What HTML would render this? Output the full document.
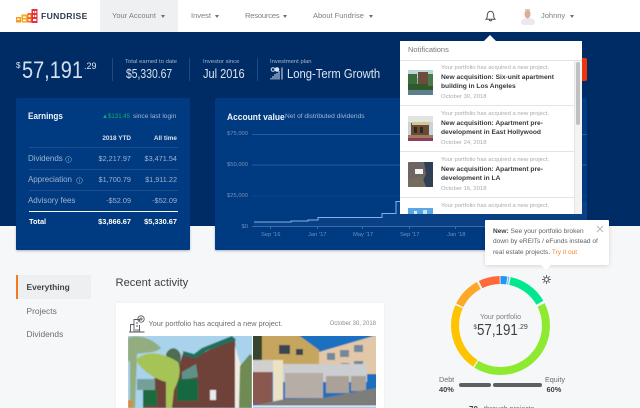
<!DOCTYPE html>
<html style="width:640px;height:408px;overflow:hidden"><head><meta charset="utf-8"><style>
html,body{margin:0;padding:0}
body{width:640px;height:408px;overflow:hidden;position:relative;background:#f6f7f9;font-family:"Liberation Sans",sans-serif}
.a{position:absolute;white-space:nowrap;line-height:12px;height:12px}
.b{position:absolute}
.r{text-align:right}
.s{transform-origin:0 50%}
.nav{font-size:7.5px;color:#7a7d82}
.car{position:absolute;width:0;height:0;border-left:2.5px solid transparent;border-right:2.5px solid transparent;border-top:3px solid #6b6e73}
.lbl{font-size:5.9px;color:#a5b6cf}
.val{font-size:12.5px;color:#dbe3ef}
.e{font-size:7.3px;color:#9fb3cf}
.el{font-size:8px;color:#9fb3cf;letter-spacing:-.05px}
.t{font-size:7.4px;color:#fff;font-weight:bold}
.ln{position:absolute;height:1px;background:#1d4e8d}
.g{font-size:5.9px;color:#a8aaae}
.h{font-size:6.65px;color:#34373c;font-weight:bold}
.ax{font-size:5.8px;color:#7290bb}
.tp{font-size:6.55px;color:#5c5f63}
</style></head><body>
<!-- header -->
<div class="b" style="left:0;top:0;width:640px;height:32px;background:#fff"></div>
<div class="b" style="left:100px;top:0;width:78px;height:32px;background:#eff0f2"></div>
<svg class="b" style="left:16px;top:9px" width="22" height="14" viewBox="0 0 22 14">
<rect x="0" y="8" width="5" height="5.5" fill="#f79a1e"/><rect x="5.5" y="5.5" width="6" height="8" fill="#f5a623"/><rect x="11.5" y="4" width="5" height="9.5" fill="#f36b21"/><rect x="15.5" y="0" width="6" height="14" fill="#e8303a"/>
<g fill="#fff"><rect x="1.2" y="9.5" width="2.5" height="1.5"/><rect x="7" y="7.5" width="3" height="1.5"/><rect x="7" y="10.5" width="3" height="1.5"/><rect x="12.5" y="6" width="2" height="2"/><rect x="12.5" y="10" width="2" height="2"/><rect x="17" y="2" width="1.3" height="2"/><rect x="19" y="2" width="1.3" height="2"/><rect x="17" y="6" width="1.3" height="2"/><rect x="19" y="6" width="1.3" height="2"/><rect x="17" y="10" width="3.3" height="2"/></g></svg>
<div class="a" style="left:41px;top:10px;font-size:8.6px;font-weight:bold;color:#2c3a4d;letter-spacing:.35px">FUNDRISE</div>
<div class="a nav" style="left:112px;top:10px">Your Account</div><div class="car" style="left:161px;top:15px"></div>
<div class="a nav" style="left:191px;top:10px">Invest</div><div class="car" style="left:215px;top:15px"></div>
<div class="a nav" style="left:245px;top:10px;letter-spacing:-.15px">Resources</div><div class="car" style="left:283px;top:15px"></div>
<div class="a nav" style="left:313px;top:10px">About Fundrise</div><div class="car" style="left:369px;top:15px"></div>
<svg class="b" style="left:485px;top:10px" width="11" height="12" viewBox="0 0 11 12" fill="none" stroke="#4a4d52" stroke-width="1"><path d="M1 9.3C2.3 8.2 2.3 7 2.3 5.2 2.3 3 3.6 1.3 5.5 1.3S8.7 3 8.7 5.2C8.7 7 8.7 8.2 10 9.3Z"/><path d="M4.3 9.6C4.3 11.3 6.7 11.3 6.7 9.6"/></svg>
<svg class="b" style="left:520px;top:8px" width="16" height="17" viewBox="0 0 16 17"><ellipse cx="8" cy="14" rx="7" ry="4" fill="#ebe8ee"/><ellipse cx="7.5" cy="6" rx="3" ry="4.5" fill="#dcae96"/><rect x="5" y="1" width="5" height="2" rx="1" fill="#d2c4b8"/></svg>
<div class="a nav" style="left:541px;top:10px">Johnny</div><div class="car" style="left:570px;top:15px"></div>
<!-- blue band -->
<div class="b" style="left:0;top:32px;width:640px;height:194px;background:#002c66"></div>
<div class="a" style="left:16px;top:60px;font-size:8px;color:#dfe6f0">$</div>
<div class="a s" style="left:21.5px;top:65px;font-size:24px;color:#d5deeb;transform:scaleX(.83)">57,191</div>
<div class="a" style="left:84px;top:60px;font-size:9px;color:#dfe6f0">.29</div>
<div class="b" style="left:112px;top:58px;width:1px;height:23px;background:#1d4a85"></div>
<div class="b" style="left:189px;top:58px;width:1px;height:23px;background:#1d4a85"></div>
<div class="b" style="left:257px;top:58px;width:1px;height:23px;background:#1d4a85"></div>
<div class="a lbl" style="left:125px;top:56px">Total earned to date</div>
<div class="a val s" style="left:125.5px;top:68px;transform:scaleX(.83)">$5,330.67</div>
<div class="a lbl" style="left:203px;top:56px">Investor since</div>
<div class="a val s" style="left:203px;top:68px;transform:scaleX(.88)">Jul 2016</div>
<div class="a lbl" style="left:270px;top:56px">Investment plan</div>
<svg class="b" style="left:270px;top:67px" width="13" height="13" viewBox="0 0 13 13" fill="none" stroke="#dbe3ee" stroke-width="1"><circle cx="3" cy="2.5" r="1.8"/><circle cx="7" cy="2.5" r="1.8" fill="#dbe3ee"/><path d="M1 12.5V11M3 12.5V9M5 12.5V7M7 12.5V6M9 12.5V4M12 .5V12.5"/></svg>
<div class="a val s" style="left:287px;top:68px;transform:scaleX(.9)">Long-Term Growth</div>
<!-- red sliver -->
<div class="b" style="left:570px;top:58px;width:17px;height:23px;background:#f0330f;border-radius:2px"></div>
<!-- earnings -->
<div class="b" style="left:16px;top:98px;width:174px;height:152px;background:#003a80;border-radius:1px;box-shadow:0 1px 2px rgba(0,30,80,.3)"></div>
<div class="a s" style="left:28px;top:111px;font-size:9.6px;color:#f2f5fa;font-weight:bold;transform:scaleX(.85)">Earnings</div>
<div class="a" style="left:102px;top:111px;font-size:6.1px;color:#10b06d">▲$131.45</div>
<div class="a" style="left:133px;top:111px;font-size:6.6px;color:#a5b6cf">since last login</div>
<div class="a t r" style="left:91px;width:40px;top:133px;font-size:6.4px;color:#d7e0ec">2018 YTD</div>
<div class="a t r" style="left:137px;width:40px;top:133px;font-size:6.4px;color:#d7e0ec">All time</div>
<div class="ln" style="left:29px;top:147px;width:149px"></div>
<div class="ln" style="left:29px;top:169px;width:149px"></div>
<div class="ln" style="left:29px;top:190px;width:149px"></div>
<div class="b" style="left:29px;top:211px;width:149px;height:1px;background:#fff"></div>
<div class="a el" style="left:28px;top:153px">Dividends</div>
<svg class="b" style="left:65px;top:156px" width="7" height="7" viewBox="0 0 7 7" fill="none" stroke="#7d96bb" stroke-width=".6"><circle cx="3.5" cy="3.5" r="2.9"/><path d="M3.5 2V5.3"/></svg>
<div class="a e r" style="left:91px;width:40px;top:153px">$2,217.97</div><div class="a e r" style="left:137px;width:40px;top:153px">$3,471.54</div>
<div class="a el" style="left:28px;top:174px">Appreciation</div>
<svg class="b" style="left:76px;top:177px" width="7" height="7" viewBox="0 0 7 7" fill="none" stroke="#7d96bb" stroke-width=".6"><circle cx="3.5" cy="3.5" r="2.9"/><path d="M3.5 2V5.3"/></svg>
<div class="a e r" style="left:91px;width:40px;top:174px">$1,700.79</div><div class="a e r" style="left:137px;width:40px;top:174px">$1,911.22</div>
<div class="a el" style="left:28px;top:195px">Advisory fees</div>
<div class="a e r" style="left:91px;width:40px;top:195px">-$52.09</div><div class="a e r" style="left:137px;width:40px;top:195px">-$52.09</div>
<div class="a t" style="left:29px;top:216px">Total</div>
<div class="a t r" style="left:91px;width:40px;top:216px">$3,866.67</div><div class="a t r" style="left:137px;width:40px;top:216px">$5,330.67</div>
<!-- account value -->
<div class="b" style="left:215px;top:98px;width:372px;height:152px;background:#003a80;border-radius:1px;box-shadow:0 1px 2px rgba(0,30,80,.3)"></div>
<div class="a s" style="left:227px;top:111px;font-size:9.4px;color:#f2f5fa;font-weight:bold;transform:scaleX(.9)">Account value</div>
<div class="a" style="left:285px;top:111px;font-size:6.6px;color:#a5b6cf">Net of distributed dividends</div>
<svg class="b" style="left:215px;top:98px" width="372" height="152" viewBox="215 98 372 152">
<path d="M252 134.5H587M252 165H587" stroke="#2a5a99" stroke-width="1"/><path d="M252 196H587" stroke="#0d4489" stroke-width="1"/>
<path d="M254 222H291V221H308V220H318V217.5H382V213.5H396V201.5H587V226.5H254Z" fill="#0a4186"/>
<path d="M252 226.5H587" stroke="#3c6ba8" stroke-width="1"/>
<path d="M270.5 226V229M317.5 226V229M362.5 226V229M409.5 226V229M455.5 226V229" stroke="#3c6ba8" stroke-width="1"/>
<path d="M254 222H291V221H308V220H318V217.5H382V213.5H396V201.5H410" fill="none" stroke="#7fb4ea" stroke-width="1"/>
</svg>
<div class="a ax r" style="left:218px;width:30px;top:128px">$75,000</div>
<div class="a ax r" style="left:218px;width:30px;top:159px">$50,000</div>
<div class="a ax r" style="left:218px;width:30px;top:190px">$25,000</div>
<div class="a ax r" style="left:218px;width:30px;top:221px">$0</div>
<div class="a ax" style="left:261px;top:229px">Sep '16</div>
<div class="a ax" style="left:308px;top:229px">Jan '17</div>
<div class="a ax" style="left:353px;top:229px">May '17</div>
<div class="a ax" style="left:400px;top:229px">Sep '17</div>
<div class="a ax" style="left:447px;top:229px">Jan '18</div>
<!-- notifications popup -->
<div class="b" style="left:484px;top:35px;width:0;height:0;border-left:6px solid transparent;border-right:6px solid transparent;border-bottom:6px solid #fff"></div>
<div class="b" style="left:400px;top:41px;width:182px;height:173px;background:#fff;overflow:hidden">
<div class="a" style="left:8px;top:3px;font-size:7.5px;color:#75787d">Notifications</div>
<div class="b" style="left:0;top:19px;width:182px;height:1px;background:#e2e3e5"></div>
<div class="b" style="left:0;top:64px;width:174px;height:1px;background:#e2e3e5"></div>
<div class="b" style="left:0;top:110px;width:174px;height:1px;background:#e2e3e5"></div>
<div class="b" style="left:0;top:156px;width:174px;height:1px;background:#e2e3e5"></div>
<div class="b" style="left:174px;top:20px;width:8px;height:153px;background:#f3f3f4;border-left:1px solid #e4e4e6;box-sizing:border-box"></div>
<div class="b" style="left:176px;top:21px;width:4px;height:63px;background:#bfc0c2;border-radius:2px"></div>
<div class="a g" style="left:41px;top:21px">Your portfolio has acquired a new project.</div>
<div class="a h" style="left:41px;top:31px">New acquisition: Six-unit apartment</div>
<div class="a h" style="left:41px;top:40px">building in Los Angeles</div>
<div class="a g" style="left:41px;top:50px">October 30, 2018</div>
<div class="a g" style="left:41px;top:67px">Your portfolio has acquired a new project.</div>
<div class="a h" style="left:41px;top:77px">New acquisition: Apartment pre-</div>
<div class="a h" style="left:41px;top:86px">development in East Hollywood</div>
<div class="a g" style="left:41px;top:96px">October 24, 2018</div>
<div class="a g" style="left:41px;top:113px">Your portfolio has acquired a new project.</div>
<div class="a h" style="left:41px;top:123px">New acquisition: Apartment pre-</div>
<div class="a h" style="left:41px;top:132px">development in LA</div>
<div class="a g" style="left:41px;top:142px">October 16, 2018</div>
<div class="a g" style="left:41px;top:159px">Your portfolio has acquired a new project.</div>
<svg class="b" style="left:8px;top:29px" width="25" height="25" viewBox="0 0 25 25"><rect width="25" height="25" rx="1" fill="#8fb3a0"/><rect y="0" width="25" height="8" fill="#b9d5d8"/><rect x="10" y="2" width="10" height="13" fill="#6d4c3f"/><rect x="0" y="4" width="9" height="14" fill="#3d6b3b"/><rect y="14" width="25" height="7" fill="#2f5a2e"/><rect y="20" width="25" height="5" fill="#5d7f8c"/><rect x="20" y="4" width="5" height="12" fill="#4a7a4a"/></svg>
<svg class="b" style="left:8px;top:75px" width="25" height="25" viewBox="0 0 25 25"><rect width="25" height="25" rx="1" fill="#c8d4dc"/><rect y="0" width="25" height="6" fill="#e2e4de"/><rect x="3" y="7" width="18" height="12" fill="#6a4a30"/><path d="M4 6H22V9H4Z" fill="#d8c49a"/><rect x="6" y="11" width="3" height="6" fill="#2d2822"/><rect x="12" y="11" width="3" height="6" fill="#2d2822"/><rect y="19" width="25" height="6" fill="#a07a60"/><rect y="22" width="25" height="3" fill="#8a3f5a"/></svg>
<svg class="b" style="left:8px;top:121px" width="25" height="25" viewBox="0 0 25 25"><rect width="25" height="25" rx="1" fill="#6e6464"/><path d="M16 0H25V25H12L18 12Z" fill="#2f4054"/><path d="M0 18L14 14 18 25H0Z" fill="#756c60"/><rect x="7" y="7" width="8" height="5" fill="#f4f4f2"/></svg>
<svg class="b" style="left:8px;top:167px" width="25" height="8" viewBox="0 0 25 8"><rect width="25" height="8" fill="#5aa7e6"/><rect x="6" y="3" width="3" height="5" fill="#dcecf7"/><rect x="15" y="2" width="4" height="6" fill="#cfe2f0"/></svg>
</div>
<!-- tooltip -->
<div class="b" style="left:485px;top:220px;width:124px;height:45px;background:#fff;border-radius:1px;box-shadow:0 1px 4px rgba(0,0,0,.14)"></div>
<div class="b" style="left:541px;top:265px;width:0;height:0;border-left:5px solid transparent;border-right:5px solid transparent;border-top:5px solid #fff"></div>
<div class="a tp" style="left:493px;top:225.5px"><b style="color:#3c3f44">New:</b> See your portfolio broken</div>
<div class="a tp" style="left:493px;top:236px">down by eREITs / eFunds instead of</div>
<div class="a tp" style="left:493px;top:247px">real estate projects. <span style="color:#f58a34">Try it out</span></div>
<svg class="b" style="left:596px;top:225px" width="8" height="8" viewBox="0 0 8 8"><path d="M1 1L7 7M7 1L1 7" stroke="#b9babd" stroke-width="1"/></svg>
<!-- gear -->
<svg class="b" style="left:542px;top:275px" width="9" height="9" viewBox="0 0 9 9" fill="none" stroke="#63666b"><circle cx="4.5" cy="4.5" r="2" stroke-width="1.1"/><path d="M4.5 0V2M4.5 7V9M0 4.5H2M7 4.5H9M1.3 1.3L2.7 2.7M6.3 6.3L7.7 7.7M1.3 7.7L2.7 6.3M6.3 2.7L7.7 1.3" stroke-width="1"/></svg>
<!-- nav side -->
<div class="b" style="left:16px;top:275px;width:75px;height:24px;background:#eeeff1"></div>
<div class="b" style="left:16px;top:275px;width:1.5px;height:24px;background:#f47a1f"></div>
<div class="a" style="left:26.5px;top:281px;font-size:8.4px;font-weight:bold;color:#3f4247">Everything</div>
<div class="a" style="left:26.5px;top:305px;font-size:8.4px;color:#6a6d72">Projects</div>
<div class="a" style="left:26.5px;top:328px;font-size:8.4px;color:#6a6d72">Dividends</div>
<div class="a" style="left:115.5px;top:277px;font-size:11.2px;color:#3c3f44">Recent activity</div>
<!-- card -->
<div class="b" style="left:116px;top:303px;width:268px;height:105px;background:#fff;box-shadow:0 0 2px rgba(0,0,0,.05)"></div>
<svg class="b" style="left:128px;top:315px" width="18" height="18" viewBox="0 0 18 18" fill="none" stroke="#55585c" stroke-width=".9"><path d="M1 17H16.5M2.5 17V9.5H6V17M6 17V4.5H11.5V6M11.5 10V17M8 8H10M8 11H10M8 14V17H10V14"/><circle cx="13" cy="4" r="3.2"/><path d="M13 2.2V5.8M11.2 4H14.8"/></svg>
<div class="a" style="left:148.5px;top:318px;font-size:7.3px;color:#6a6d72">Your portfolio has acquired a new project.</div>
<div class="a r" style="left:316px;width:60px;top:318px;font-size:6px;color:#8a8d91">October 30, 2018</div>
<svg class="b" style="left:128px;top:336px" width="124" height="72" viewBox="0 0 124 72">
<defs><filter id="bl" x="-5%" y="-5%" width="110%" height="110%"><feGaussianBlur stdDeviation=".5"/></filter></defs>
<g filter="url(#bl)">
<rect x="-2" y="-2" width="128" height="76" fill="#a9d2ec"/>
<path d="M15 72V50L30 40 50 34 55 17 68 20 107 2 109 72Z" fill="#6e4238"/>
<path d="M55 15L66 18 74 12 104 0 108 4 78 15 68 22 56 20Z" fill="#1f6f5c"/>
<path d="M107 10L116 40V72H107Z" fill="#efece4"/>
<path d="M112 30L122 18 124 20V72H111Z" fill="#6f8a52"/>
<rect x="9" y="43" width="18" height="11" fill="#75a09a"/><rect x="15" y="54" width="14" height="16" fill="#1c6b3c"/>
<path d="M54 36L68 28 70 41 54 44Z" fill="#5f9189"/><rect x="49" y="43" width="21" height="22" fill="#19683f"/>
<rect x="82" y="54" width="6" height="10" fill="#e8eaec"/>
<path d="M0 2C10 -2 24 2 33 12 26 18 16 16 9 18L7 72H2L2 26 0 24Z" fill="#93ad7e"/>
<path d="M38 18C42 10 50 10 53 20L52 30H40Z" fill="#4f6d50"/>
<path d="M8 24C18 14 34 16 50 26 54 36 50 46 46 54L44 72H38V46C30 44 14 36 8 24Z" fill="#a6c455"/>
<rect x="0" y="64" width="5" height="8" fill="#d49040"/>
</g></svg>
<svg class="b" style="left:253px;top:336px" width="123" height="72" viewBox="0 0 123 72">
<g filter="url(#bl)">
<rect x="-2" y="-2" width="127" height="76" fill="#1b6fc0"/>
<rect x="-2" y="-2" width="11" height="28" fill="#38442f"/>
<path d="M9 -2H44L66 14V28H9Z" fill="#c6a65e"/>
<rect x="26" y="9" width="11" height="9" fill="#3b4551"/><rect x="43" y="13" width="7" height="6" fill="#3b4551"/>
<path d="M66 16L124 -1V38H66Z" fill="#e2c8a8"/>
<rect x="74" y="17" width="8" height="7" fill="#73889a"/><rect x="87" y="14" width="9" height="7" fill="#73889a"/><rect x="101" y="9" width="9" height="7" fill="#73889a"/><rect x="88" y="27" width="8" height="6" fill="#73889a"/><rect x="101" y="25" width="9" height="7" fill="#73889a"/>
<path d="M30 28H114V46H30Z" fill="#cbcdd0"/>
<rect x="-2" y="24" width="22" height="12" fill="#d2d0cf"/><rect x="20" y="24" width="10" height="44" fill="#ebe2c4"/>
<rect x="-2" y="36" width="21" height="32" fill="#8a5850"/>
<rect x="32" y="37" width="38" height="25" fill="#b6ada6"/><rect x="73" y="40" width="23" height="17" fill="#aaa199"/><rect x="98" y="40" width="15" height="15" fill="#aaa199"/>
<path d="M-2 70L32 63 70 62 123 52V72H-2Z" fill="#7d7e7c"/>
</g><rect y="69.5" width="123" height="1" fill="#fff"/><rect y="70.5" width="123" height="2" fill="#a9c9e4"/></svg>
<!-- donut -->
<svg class="b" style="left:445px;top:270px" width="111" height="111" viewBox="0 0 111 111">
<g fill="none" stroke-width="8" transform="rotate(-90 55.5 55.5)">
<circle cx="55.5" cy="55.5" r="45.5" pathLength="360" stroke="#2196f3" stroke-dasharray="8 352" stroke-dashoffset="0"/>
<circle cx="55.5" cy="55.5" r="45.5" pathLength="360" stroke="#5dc5f5" stroke-dasharray="1.5 358.5" stroke-dashoffset="-9"/>
<circle cx="55.5" cy="55.5" r="45.5" pathLength="360" stroke="#00e88f" stroke-dasharray="48 312" stroke-dashoffset="-12"/>
<circle cx="55.5" cy="55.5" r="45.5" pathLength="360" stroke="#8eea30" stroke-dasharray="149 211" stroke-dashoffset="-63"/>
<circle cx="55.5" cy="55.5" r="45.5" pathLength="360" stroke="#ffc400" stroke-dasharray="81 279" stroke-dashoffset="-213.5"/>
<circle cx="55.5" cy="55.5" r="45.5" pathLength="360" stroke="#ffa726" stroke-dasharray="35 325" stroke-dashoffset="-296.5"/>
<circle cx="55.5" cy="55.5" r="45.5" pathLength="360" stroke="#ff6a3a" stroke-dasharray="25 335" stroke-dashoffset="-334"/>
</g></svg>
<div class="a" style="left:470px;width:61px;top:312px;text-align:center;font-size:7px;color:#7c7f84">Your portfolio</div>
<div class="a" style="left:473.5px;top:322px;font-size:6px;color:#3c3f44">$</div>
<div class="a s" style="left:477px;top:325px;font-size:15.5px;color:#3c3f44;transform:scaleX(.86)">57,191</div>
<div class="a" style="left:518px;top:322px;font-size:7px;color:#3c3f44">.29</div>
<div class="a" style="left:439px;top:374px;font-size:7.2px;color:#6a6d72">Debt</div>
<div class="a" style="left:439px;top:384px;font-size:7.4px;color:#3c3f44;font-weight:bold">40%</div>
<div class="a" style="left:545px;top:374px;font-size:7.2px;color:#6a6d72">Equity</div>
<div class="a" style="left:546.5px;top:384px;font-size:7.4px;color:#3c3f44;font-weight:bold">60%</div>
<div class="b" style="left:459px;top:383px;width:32px;height:4px;background:#5c5f63;border-radius:2px"></div>
<div class="b" style="left:493px;top:383px;width:49px;height:4px;background:#5c5f63;border-radius:2px"></div>
<div class="a" style="left:469px;top:404px;font-size:8px;color:#3c3f44;font-weight:bold">70</div>
<div class="a" style="left:484px;top:404px;font-size:7px;color:#6a6d72">through projects</div>
</body></html>
